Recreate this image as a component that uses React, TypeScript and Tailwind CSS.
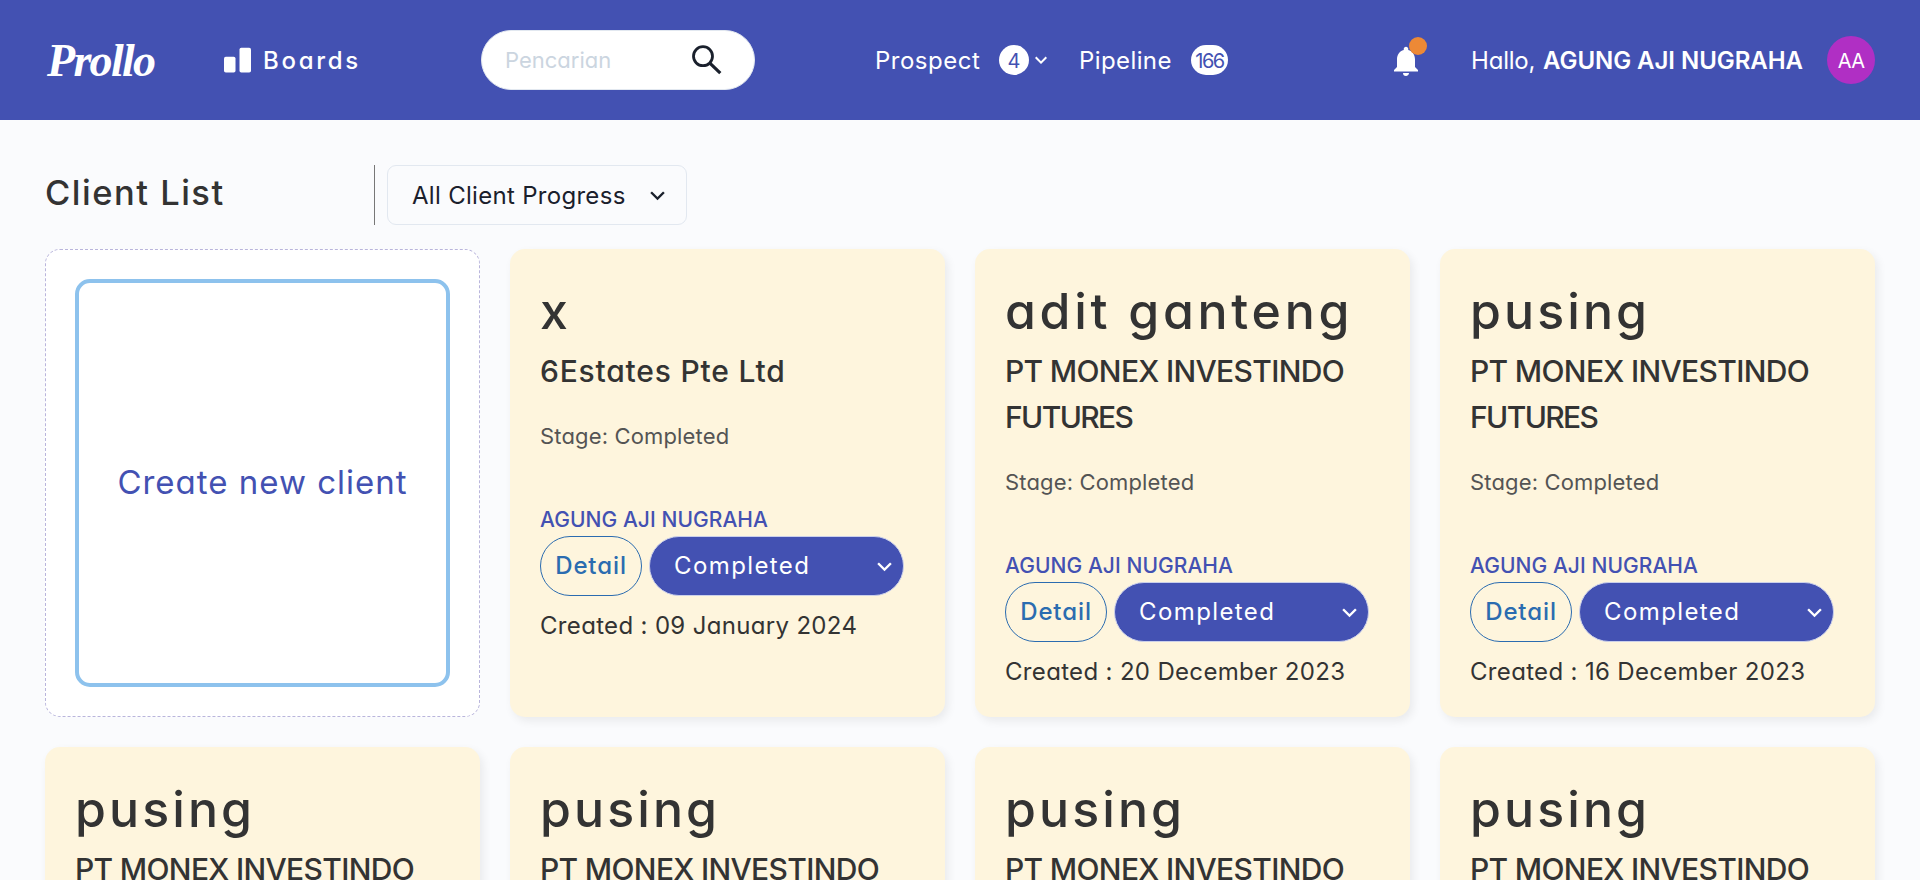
import { MdExpandMore, MdNotifications } from "react-icons/md";

type Client = {
  name: string;
  nameTracking: string;
  company: string[];
  created: string;
};

const monex = ["PT MONEX INVESTINDO", "FUTURES"];

const pusing = (created: string): Client => ({
  name: "pusing",
  nameTracking: "tracking-[3.1px]",
  company: monex,
  created,
});

const clients: Client[] = [
  { name: "x", nameTracking: "tracking-normal", company: ["6Estates Pte Ltd"], created: "09 January 2024" },
  { name: "adit ganteng", nameTracking: "tracking-[3.7px]", company: monex, created: "20 December 2023" },
  pusing("16 December 2023"),
  pusing("16 December 2023"),
  pusing("16 December 2023"),
  pusing("16 December 2023"),
  pusing("16 December 2023"),
];

const companyTracking: Record<string, string> = {
  "6Estates Pte Ltd": "tracking-[0.8px]",
  "PT MONEX INVESTINDO": "tracking-[-0.67px]",
  FUTURES: "tracking-[-1.6px]",
};

function BoardsIcon() {
  return (
    <svg className="h-[26px] w-[28px]" viewBox="0 0 28 26" fill="#fff">
      <rect x="0" y="9.7" width="11.5" height="15.8" rx="1.8" />
      <rect x="15.5" y="0.7" width="11.5" height="24.8" rx="1.8" />
    </svg>
  );
}

function SearchIcon() {
  return (
    <svg className="size-10" viewBox="0 0 40 40" fill="none" stroke="#1a202c">
      <circle cx="16" cy="16.2" r="9.5" strokeWidth="2.8" />
      <path d="M22.6 22.8 33.3 33.2" strokeWidth="3.2" />
    </svg>
  );
}

function Header() {
  return (
    <header className="flex h-[120px] items-center bg-[#4351b2] px-[45px] text-2xl text-white">
      <div className="w-[179px] pl-[2px] pt-[2px] font-['Liberation_Serif',serif] text-[46px] font-bold italic leading-[60px] tracking-[-1.7px]">
        Prollo
      </div>
      <a className="flex w-[257px] items-center">
        <BoardsIcon />
        <span className="ml-[11px] pt-[2px] font-medium tracking-[2.7px]">Boards</span>
      </a>
      <div className="flex h-[60px] w-[274px] items-center rounded-[30px] border border-[#e2e8f0] bg-white pl-[23px]">
        <span className="w-[182px] pt-[2px] text-[22px] text-[#cbd5e0]">Pencarian</span>
        <SearchIcon />
      </div>
      <div className="ml-[119px] flex items-center">
        <span className="w-[125px] pl-px pt-[2px] tracking-[0.5px]">Prospect</span>
        <span className="flex size-[30px] items-center justify-center rounded-full bg-white pt-[2px] text-xl text-[#4351b2]">
          4
        </span>
        <MdExpandMore className="size-6" />
        <span className="ml-[26px] w-[112px] pt-[2px] tracking-[0.4px]">Pipeline</span>
        <span className="flex h-[30px] w-[37px] items-center justify-center rounded-[15px] bg-white pt-[2px] text-xl tracking-[-1.5px] text-[#4351b2]">
          166
        </span>
      </div>
      <div className="ml-auto flex items-center">
        <div className="relative size-9">
          <MdNotifications className="mt-px size-9" />
          <span className="absolute -top-[5px] right-[-3px] size-[18px] rounded-full bg-[#ed8936]" />
        </div>
        <span className="ml-[47px] w-[72px] pt-[2px] tracking-[-0.2px]">Hallo,</span>
        <span className="w-[284px] whitespace-nowrap pt-[2px] font-semibold tracking-[-0.05px]">AGUNG AJI NUGRAHA</span>
        <span className="flex size-12 items-center justify-center rounded-full bg-[#b02fc4] pt-[2px] text-xl tracking-[-0.6px]">
          AA
        </span>
      </div>
    </header>
  );
}

function Toolbar() {
  return (
    <div className="flex h-[60px] items-center">
      <h1 className="w-[329px] pb-[4px] text-[34.5px] font-medium tracking-[1.5px]">Client List</h1>
      <div className="h-full w-px bg-[#777]" />
      <div className="ml-3 flex h-full w-[300px] items-center rounded-[9px] border border-[#e2e8f0] pl-6 text-2xl text-[#1a202c]">
        <span className="w-[231px] whitespace-nowrap pt-px tracking-[0.3px]">All Client Progress</span>
        <MdExpandMore className="size-[29px]" />
      </div>
    </div>
  );
}

function CreateCard() {
  return (
    <div className="rounded-[15px] border border-dashed border-[#b9b5dc] bg-white p-[29px]">
      <button className="flex size-full items-center justify-center rounded-[15px] border-4 border-[#8dc2ed] text-[33px] tracking-[1px] text-[#4351b2]">
        Create new client
      </button>
    </div>
  );
}

function ClientCard({ client }: { client: Client }) {
  return (
    <article className="rounded-[15px] bg-[#fef5dd] px-[30px] pt-[31px] shadow-[3px_4px_10px_rgba(0,0,0,0.07)]">
      <h2 className={`text-[50px] font-medium leading-[63px] ${client.nameTracking}`}>{client.name}</h2>
      <div className="mt-[5px] text-[30px] font-medium leading-[46px]">
        {client.company.map((line) => (
          <p key={line} className={`whitespace-nowrap ${companyTracking[line]}`}>
            {line}
          </p>
        ))}
      </div>
      <p className="mt-[26px] text-[22px] leading-8 tracking-[0.15px] text-[#545454]">Stage: Completed</p>
      <p className="mt-[52px] text-[21px] font-medium leading-8 tracking-[0.06px] text-[#4351b2]">AGUNG AJI NUGRAHA</p>
      <div className="flex h-[60px] gap-[7px]">
        <button className="w-[102px] rounded-[30px] border border-[#2b6cb0] text-2xl font-medium tracking-[0.9px] text-[#2b6cb0]">
          Detail
        </button>
        <div className="flex w-[255px] items-center rounded-[30px] border border-[#cbd0ea] bg-[#4351b2] pl-6 text-2xl text-white">
          <span className="w-[196px] tracking-[1.4px]">Completed</span>
          <MdExpandMore className="size-[29px]" />
        </div>
      </div>
      <p className="mt-[12px] whitespace-nowrap text-2xl leading-9 tracking-[0.33px]">Created : {client.created}</p>
    </article>
  );
}

export default function App() {
  return (
    <div className="h-[880px] w-[1920px] overflow-hidden bg-[#fafbfd] font-['Inter',sans-serif] text-[#333] [font-feature-settings:'cv11']">
      <Header />
      <main className="px-[45px] pt-[45px]">
        <Toolbar />
        <section className="mt-6 grid auto-rows-[468px] grid-cols-4 gap-[30px]">
          <CreateCard />
          {clients.map((client, i) => (
            <ClientCard key={i} client={client} />
          ))}
        </section>
      </main>
    </div>
  );
}
